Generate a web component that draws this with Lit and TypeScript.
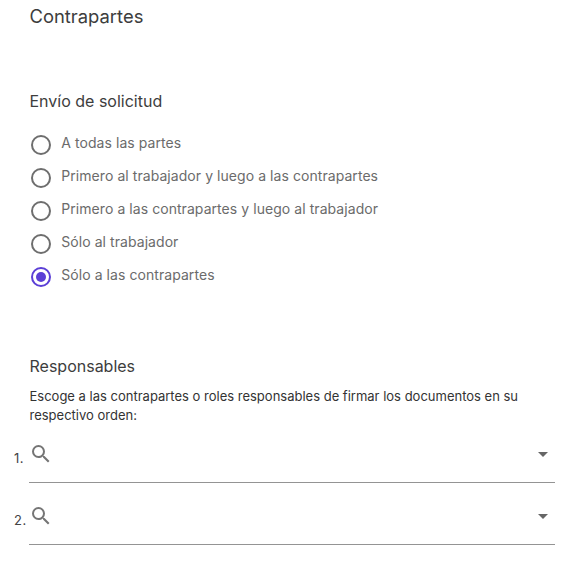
import { LitElement, html, css, svg } from "lit";
import { customElement } from "lit/decorators.js";

const options = [
  "A todas las partes",
  "Primero al trabajador y luego a las contrapartes",
  "Primero a las contrapartes y luego al trabajador",
  "Sólo al trabajador",
  "Sólo a las contrapartes",
];

@customElement("app-root")
export class AppRoot extends LitElement {
  static styles = css`
    :host { display: block; width: 572px; height: 564px; overflow: hidden; background: #fff; font-family: Inter, sans-serif; box-sizing: border-box; padding: 6px 17px 0 29px; }
    h1 { margin: 0; padding-left: 0.5px; font-size: 18.4px; line-height: 20px; font-weight: 400; color: #3d3d3d; }
    h2 { margin: 0; padding-left: 0.5px; font-size: 16px; line-height: 20px; font-weight: 400; color: #3d3d3d; }
    .send { margin-top: 65px; }
    .group { margin-top: 22px; padding-left: 0.3px; display: flex; flex-direction: column; }
    .opt { height: 33px; display: flex; align-items: flex-start; gap: 8px; font-size: 14px; line-height: 20px; color: #6b6b6b; letter-spacing: 0.06px; }
    .opt svg { flex: none; }
    .resp { margin-top: 58px; }
    p { margin: 11px 0 0; padding-left: 0.5px; font-size: 13px; line-height: 19px; color: #333; }
    .field { position: relative; height: 40px; border-bottom: 1px solid #949494; margin-top: 21px; display: flex; justify-content: space-between; align-items: flex-start; }
    .first { margin-top: 17px; }
    .num { position: absolute; left: -15px; top: 9px; font-size: 13px; line-height: 15px; letter-spacing: 0.5px; color: #444; }
    .arrow { width: 0; height: 0; margin: 10px 7px 0 0; border-left: 5px solid transparent; border-right: 5px solid transparent; border-top: 5px solid #666; }
  `;

  private radio(on: boolean) {
    const c = on ? "#5b3fd6" : "#6e6e6e";
    return html`<svg width="24" height="24" viewBox="0 0 24 24">
      <circle cx="12" cy="12" r="9" fill="none" stroke=${c} stroke-width="2"></circle>
      ${on ? svg`<circle cx="12" cy="12" r="5" fill=${c}></circle>` : null}
    </svg>`;
  }

  private field(n: number, first: boolean) {
    return html`<div class="field ${first ? "first" : ""}">
      <span class="num">${n}.</span>
      <svg width="24" height="24" viewBox="0 0 24 24">
        <path fill="#757575" d="M15.5 14h-.79l-.28-.27A6.471 6.471 0 0 0 16 9.5 6.5 6.5 0 1 0 9.5 16c1.61 0 3.09-.59 4.23-1.57l.27.28v.79l5 4.99L20.49 19l-4.99-5zm-6 0C7.01 14 5 11.99 5 9.5S7.01 5 9.5 5 14 7.01 14 9.5 11.99 14 9.5 14z"></path>
      </svg>
      <span class="arrow"></span>
    </div>`;
  }

  render() {
    return html`
      <h1>Contrapartes</h1>
      <h2 class="send">Envío de solicitud</h2>
      <div class="group">
        ${options.map((o, i) => html`<div class="opt">${this.radio(i === 4)}<span>${o}</span></div>`)}
      </div>
      <h2 class="resp">Responsables</h2>
      <p>Escoge a las contrapartes o roles responsables de firmar los documentos en su respectivo orden:</p>
      ${this.field(1, true)}
      ${this.field(2, false)}
    `;
  }
}
